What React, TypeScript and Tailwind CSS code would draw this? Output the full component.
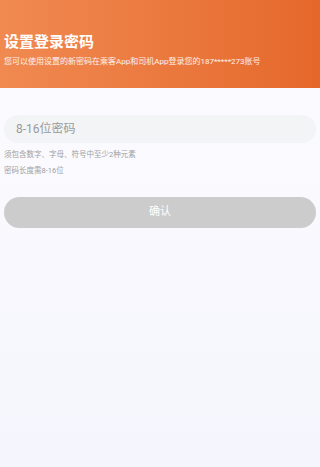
import { useState } from 'react';

const font = { fontFamily: 'Roboto, "Noto Sans CJK SC", sans-serif' };

export default function App() {
  const [pwd, setPwd] = useState('');

  return (
    <div
      className="min-h-[467px] w-full bg-gradient-to-b from-[#fcfcff] to-[#f5f5fd]"
      style={font}
    >
      <div className="h-[88px] bg-gradient-to-r from-[#f08a51] to-[#e5682a] px-1 pt-[31px] text-white">
        <h1 className="text-[15px] font-bold leading-[22px]">设置登录密码</h1>
        <p className="mt-[3px] text-[8px] leading-[12px] text-white/90">
          您可以使用设置的新密码在乘客App和司机App登录您的187*****273账号
        </p>
      </div>

      <div className="px-1 pt-[27px]">
        <input
          type="password"
          value={pwd}
          onChange={(e) => setPwd(e.target.value)}
          placeholder="8-16位密码"
          className="h-[28px] w-full rounded-full bg-[#f3f4f6] px-3 text-[12px] text-[#333] outline-none placeholder:text-[#9a9a9a]"
        />
        <div className="mt-[4px] text-[7.5px] leading-[16px] text-[#a0a0a0]">
          <p>须包含数字、字母、符号中至少2种元素</p>
          <p>密码长度需8-16位</p>
        </div>
        <button
          type="button"
          className="mt-[18px] h-[31px] w-full rounded-full bg-[#cccccc] text-[11px] text-white"
        >
          确认
        </button>
      </div>
    </div>
  );
}
